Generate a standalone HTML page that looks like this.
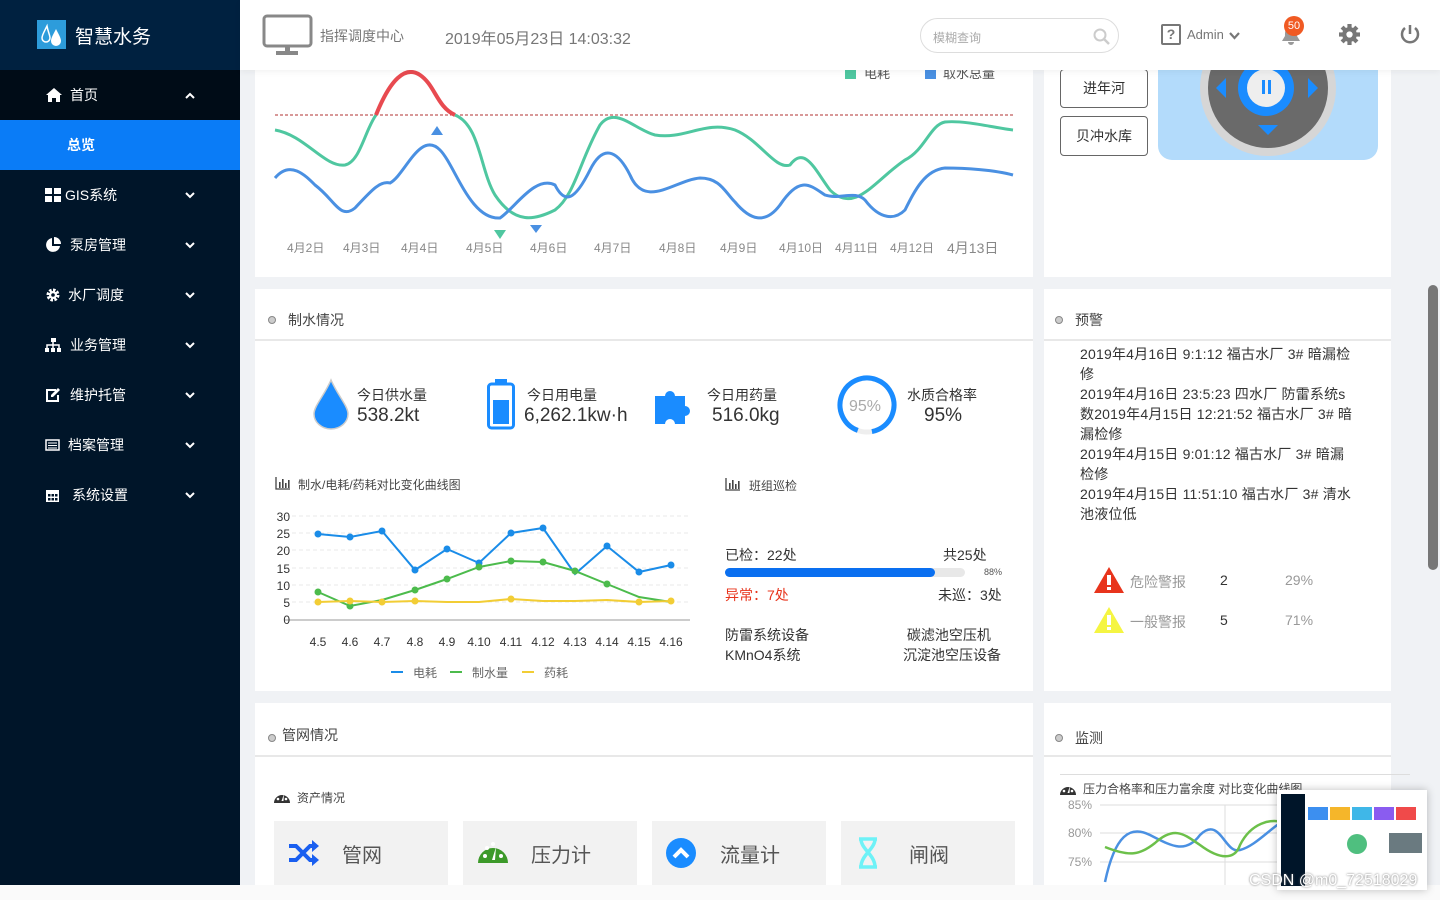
<!DOCTYPE html>
<html><head><meta charset="utf-8"><style>
*{margin:0;padding:0;box-sizing:border-box}
body{width:1440px;height:900px;overflow:hidden;background:#f0f2f5;font-family:"Liberation Sans","Noto Sans CJK SC",sans-serif;position:relative;color:#333}
.a{position:absolute}
.sb{left:0;top:0;width:240px;height:885px;background:#001529}
.logo{left:0;top:0;width:240px;height:70px;background:#002140}
.mi{position:absolute;left:0;width:240px;height:50px;color:#fff;font-size:14px;line-height:50px}
.mi svg.ic{position:absolute;left:45px;top:17px}
.mi .t{position:absolute;left:70px}
.mi svg.ar{position:absolute;left:185px;top:22px}
.card{background:#fff;position:absolute}
.ttl{position:absolute;font-size:14px;color:#444}
.dot{display:inline-block;width:8px;height:8px;border-radius:50%;border:1px solid #888;background:#ccc;margin-right:12px;vertical-align:1px}
.hr{position:absolute;height:2px;background:#e8e8e8}
.tile{position:absolute;top:821px;width:174px;height:64px;background:#f2f2f2;font-size:20px;color:#555}
.tile span{position:absolute;left:68px;top:18px}
</style></head><body>
<div class="a sb"></div>
<div class="a logo">
 <div class="a" style="left:37px;top:20px;width:29px;height:29px;background:#2d9cdb"></div>
 <svg class="a" style="left:37px;top:20px" width="29" height="29"><path d="M10 6 C7 12 5 15 5 18 a4 4 0 0 0 8 0 C13 15 11 12 10 6Z" fill="none" stroke="#fff" stroke-width="1.5"/><path d="M19 9 C16 15 14 18 14 21 a5 5 0 0 0 10 0 C24 18 22 15 19 9Z" fill="#fff"/></svg>
 <div class="a" style="left:75px;top:22px;color:#fff;font-size:19px">智慧水务</div>
</div>
<div class="mi" style="top:70px;background:#000c17"><svg class="ic" width="18" height="16"><path d="M9 1 L1 8 h2 v7 h4 v-4 h4 v4 h4 v-7 h2z" fill="#fff"/></svg><span class="t">首页</span><svg class="ar" width="10" height="7"><path d="M1 6 L5 2 L9 6" fill="none" stroke="#fff" stroke-width="2"/></svg></div>
<div class="mi" style="top:120px;background:#0a7cf7;font-weight:bold"><span class="t" style="left:67px">总览</span></div>
<div class="mi" style="top:170px"><svg class="ic" width="16" height="16"><rect x="0" y="1" width="7" height="6" fill="#fff"/><rect x="9" y="1" width="7" height="6" fill="#fff"/><rect x="0" y="9" width="7" height="6" fill="#fff"/><rect x="9" y="9" width="7" height="6" fill="#fff"/></svg><span class="t" style="left:65px">GIS系统</span><svg class="ar" width="10" height="7"><path d="M1 1 L5 5 L9 1" fill="none" stroke="#fff" stroke-width="2"/></svg></div>
<div class="mi" style="top:220px"><svg class="ic" width="16" height="16"><path d="M7 1 A7 7 0 1 0 15 9 H7Z" fill="#fff"/><path d="M9 0 V7 H16 A7 7 0 0 0 9 0Z" fill="#fff"/></svg><span class="t">泵房管理</span><svg class="ar" width="10" height="7"><path d="M1 1 L5 5 L9 1" fill="none" stroke="#fff" stroke-width="2"/></svg></div>
<div class="mi" style="top:270px"><svg class="ic" width="16" height="16"><circle cx="8" cy="8" r="5" fill="none" stroke="#fff" stroke-width="3" stroke-dasharray="2.5 1.4"/><circle cx="8" cy="8" r="4" fill="#fff"/><circle cx="8" cy="8" r="1.8" fill="#001529"/></svg><span class="t" style="left:68px">水厂调度</span><svg class="ar" width="10" height="7"><path d="M1 1 L5 5 L9 1" fill="none" stroke="#fff" stroke-width="2"/></svg></div>
<div class="mi" style="top:320px"><svg class="ic" width="16" height="16"><rect x="6" y="1" width="5" height="4" fill="#fff"/><rect x="0" y="11" width="4" height="4" fill="#fff"/><rect x="6" y="11" width="4" height="4" fill="#fff"/><rect x="12" y="11" width="4" height="4" fill="#fff"/><path d="M2 11 V8 H14 V11 M8 5 V11" fill="none" stroke="#fff" stroke-width="1.5"/></svg><span class="t">业务管理</span><svg class="ar" width="10" height="7"><path d="M1 1 L5 5 L9 1" fill="none" stroke="#fff" stroke-width="2"/></svg></div>
<div class="mi" style="top:370px"><svg class="ic" width="16" height="16"><path d="M11 3 H2 V14 H13 V8" fill="none" stroke="#fff" stroke-width="2"/><path d="M6 10 L6 8 L13 1 L15 3 L8 10Z" fill="#fff"/></svg><span class="t">维护托管</span><svg class="ar" width="10" height="7"><path d="M1 1 L5 5 L9 1" fill="none" stroke="#fff" stroke-width="2"/></svg></div>
<div class="mi" style="top:420px"><svg class="ic" width="16" height="16"><rect x="1" y="3" width="13" height="10" fill="none" stroke="#fff" stroke-width="1.5"/><path d="M3 6 H12 M3 8.5 H12 M3 11 H12" stroke="#fff"/></svg><span class="t" style="left:68px">档案管理</span><svg class="ar" width="10" height="7"><path d="M1 1 L5 5 L9 1" fill="none" stroke="#fff" stroke-width="2"/></svg></div>
<div class="mi" style="top:470px"><svg class="ic" width="16" height="16"><rect x="1" y="3" width="13" height="12" fill="#fff"/><rect x="3" y="7" width="2.5" height="2.5" fill="#001529"/><rect x="6.5" y="7" width="2.5" height="2.5" fill="#001529"/><rect x="10" y="7" width="2.5" height="2.5" fill="#001529"/><rect x="3" y="11" width="2.5" height="2.5" fill="#001529"/><rect x="6.5" y="11" width="2.5" height="2.5" fill="#001529"/><rect x="10" y="11" width="2.5" height="2.5" fill="#001529"/></svg><span class="t" style="left:72px">系统设置</span><svg class="ar" width="10" height="7"><path d="M1 1 L5 5 L9 1" fill="none" stroke="#fff" stroke-width="2"/></svg></div>

<!-- cards -->
<div class="card" style="left:255px;top:60px;width:778px;height:217px"></div>
<div class="card" style="left:1044px;top:60px;width:347px;height:217px"></div>
<div class="card" style="left:255px;top:289px;width:778px;height:402px"></div>
<div class="card" style="left:1044px;top:289px;width:347px;height:402px"></div>
<div class="card" style="left:255px;top:703px;width:778px;height:182px"></div>
<div class="card" style="left:1044px;top:703px;width:347px;height:182px"></div>
<div class="a" style="left:1428px;top:285px;width:10px;height:285px;background:#777;border-radius:5px"></div>
<div class="a" style="left:0;top:885px;width:1440px;height:15px;background:#fafafa"></div>

<!-- top chart -->
<svg class="a" style="left:255px;top:60px" width="778" height="217">
 <rect x="590" y="9" width="11" height="10" fill="#4fc7a0"/><text x="609" y="18" font-size="13" fill="#555">电耗</text>
 <rect x="670" y="9" width="11" height="10" fill="#4a90e2"/><text x="688" y="18" font-size="13" fill="#555">取水总量</text>
 <line x1="20" y1="55" x2="758" y2="55" stroke="#b03030" stroke-dasharray="3,2" stroke-width="1"/>
 <path d="M20 70 C50 75 70 108 90 105 C105 102 110 70 121 55" fill="none" stroke="#4fc7a0" stroke-width="3"/>
 <path d="M121 55 C135 20 150 5 165 15 C180 25 182 47 200 55" fill="none" stroke="#e84a50" stroke-width="4"/>
 <path d="M200 55 C225 65 225 110 240 135 C260 165 280 160 300 150 C320 135 325 100 345 65 C360 45 380 70 400 75 C430 80 450 60 480 70 C505 80 520 110 535 105 C550 85 560 110 575 130 C600 155 620 120 650 100 C670 90 675 65 690 62 C710 60 740 68 758 70" fill="none" stroke="#4fc7a0" stroke-width="3"/>
 <path d="M20 118 C35 100 50 115 60 125 C80 140 85 160 100 148 C115 132 125 120 135 123 C150 115 165 70 185 90 C200 105 215 160 245 158 C260 148 280 115 300 125 C310 145 320 140 335 110 C350 80 365 95 375 115 C390 150 420 120 445 118 C465 118 470 132 480 142 C495 160 510 165 525 145 C545 115 555 125 570 135 C585 140 600 130 610 140 C625 160 640 160 650 150 C660 130 670 110 690 108 C710 108 740 110 758 115" fill="none" stroke="#4a90e2" stroke-width="3"/>
 <path d="M176 75 l6 -9 l6 9z" fill="#4a90e2"/>
 <path d="M239 170 l6 9 l6 -9z" fill="#4fc7a0"/>
 <path d="M275 165 l6 8 l6 -8z" fill="#4a90e2"/>
 <g font-size="12" fill="#888"><text x="32" y="192">4月2日</text><text x="88" y="192">4月3日</text><text x="146" y="192">4月4日</text><text x="211" y="192">4月5日</text><text x="275" y="192">4月6日</text><text x="339" y="192">4月7日</text><text x="404" y="192">4月8日</text><text x="465" y="192">4月9日</text><text x="524" y="192">4月10日</text><text x="580" y="192">4月11日</text><text x="635" y="192">4月12日</text><text x="692" y="193" font-size="14">4月13日</text></g>
</svg>
<div class="a" style="left:1060px;top:69px;width:88px;height:39px;border:1px solid #666;border-radius:4px;font-size:14px;text-align:center;line-height:37px;background:#fff">进年河</div>
<div class="a" style="left:1060px;top:116px;width:88px;height:40px;border:1px solid #666;border-radius:4px;font-size:14px;text-align:center;line-height:38px;background:#fff">贝冲水库</div>
<div class="a" style="left:1158px;top:70px;width:220px;height:90px;background:#b3dbfb;border-radius:0 0 14px 14px;overflow:hidden">
 <svg width="220" height="90"><circle cx="110" cy="18" r="68" fill="#d6d6d6"/><circle cx="110" cy="18" r="60" fill="#6a6a6a"/><circle cx="108" cy="18" r="28" fill="#1a8cff"/><circle cx="108" cy="18" r="19" fill="#eee"/><rect x="104" y="10" width="3" height="14" fill="#1a8cff"/><rect x="110" y="10" width="3" height="14" fill="#1a8cff"/><path d="M100 55 h20 l-10 10z" fill="#1a8cff"/><path d="M150 8 l10 10 l-10 10z" fill="#1a8cff"/><path d="M68 8 l-10 10 l10 10z" fill="#1a8cff"/></svg>
</div>

<!-- header -->
<div class="a" style="left:240px;top:0;width:1200px;height:70px;background:#fff;box-shadow:0 2px 6px rgba(0,0,0,.05)"></div>
<svg class="a" style="left:262px;top:14px" width="52" height="42"><rect x="2" y="2" width="47" height="30" rx="3" fill="none" stroke="#888" stroke-width="3"/><rect x="23" y="32" width="5" height="6" fill="#888"/><rect x="14" y="37" width="22" height="4" fill="#888"/></svg>
<div class="a" style="left:320px;top:26px;font-size:14px;color:#777">指挥调度中心</div>
<div class="a" style="left:445px;top:25px;font-size:16px;color:#777">2019年05月23日 14:03:32</div>
<div class="a" style="left:920px;top:18px;width:199px;height:35px;border:1px solid #ddd;border-radius:18px"><span class="a" style="left:12px;top:10px;font-size:12px;color:#aaa">模糊查询</span>
<svg class="a" style="left:172px;top:9px" width="18" height="18"><circle cx="7" cy="7" r="5.5" fill="none" stroke="#ccc" stroke-width="2"/><line x1="11" y1="11" x2="16" y2="16" stroke="#ccc" stroke-width="2.5"/></svg></div>
<div class="a" style="left:1161px;top:24px;width:20px;height:21px;border:2px solid #777;border-radius:2px;font-size:14px;color:#777;text-align:center;line-height:17px;font-weight:bold">?</div>
<div class="a" style="left:1187px;top:27px;font-size:13px;color:#777">Admin</div>
<svg class="a" style="left:1229px;top:32px" width="11" height="8"><path d="M1 1 L5.5 6 L10 1" fill="none" stroke="#777" stroke-width="2.2"/></svg>
<svg class="a" style="left:1280px;top:24px" width="22" height="22"><path d="M11 2 C5 2 5 8 5 12 L2 17 H20 L17 12 C17 8 17 2 11 2Z M8 18 a3 3 0 0 0 6 0z" fill="#999"/></svg>
<div class="a" style="left:1284px;top:16px;width:20px;height:20px;border-radius:50%;background:#f05a23;color:#fff;font-size:11px;text-align:center;line-height:20px">50</div>
<svg class="a" style="left:1339px;top:24px" width="21" height="21" viewBox="0 0 20 20"><g fill="#777"><circle cx="10" cy="10" r="7"/><rect x="8" y="0" width="4" height="20"/><rect x="0" y="8" width="20" height="4"/><rect x="8" y="0" width="4" height="20" transform="rotate(45 10 10)"/><rect x="8" y="0" width="4" height="20" transform="rotate(-45 10 10)"/></g><circle cx="10" cy="10" r="3" fill="#fff"/></svg>
<svg class="a" style="left:1399px;top:23px" width="22" height="22"><path d="M6 5 A8 8 0 1 0 16 5" fill="none" stroke="#777" stroke-width="2.5"/><line x1="11" y1="2" x2="11" y2="11" stroke="#777" stroke-width="2.5"/></svg>

<!-- 制水情况 -->
<div class="ttl" style="left:268px;top:310px"><span class="dot"></span>制水情况</div>
<div class="hr" style="left:255px;top:339px;width:778px"></div>
<svg class="a" style="left:310px;top:378px" width="42" height="52"><path d="M21 2 C14 18 4 28 4 36 a17 15 0 0 0 34 0 C38 28 28 18 21 2Z" fill="#1a8cff" stroke="#ccc" stroke-width="1.5"/></svg>
<div class="a" style="left:357px;top:385px;font-size:14px">今日供水量</div><div class="a" style="left:357px;top:405px;font-size:19px">538.2kt</div>
<svg class="a" style="left:486px;top:378px" width="32" height="52"><rect x="2.5" y="6" width="25" height="44" rx="3" fill="none" stroke="#1a8cff" stroke-width="3"/><rect x="9" y="1" width="12" height="6" fill="#1a8cff"/><rect x="7" y="22" width="16" height="24" fill="#1a8cff"/></svg>
<div class="a" style="left:527px;top:385px;font-size:14px">今日用电量</div><div class="a" style="left:524px;top:405px;font-size:19px">6,262.1kw·h</div>
<svg class="a" style="left:653px;top:382px" width="46" height="44"><path d="M2 14 h10 a5 5 0 1 1 10 0 h10 v10 a5 5 0 1 1 0 10 v8 h-10 a5 5 0 0 0 -10 0 h-10z" fill="#1a8cff"/></svg>
<div class="a" style="left:707px;top:385px;font-size:14px">今日用药量</div><div class="a" style="left:712px;top:405px;font-size:19px">516.0kg</div>
<svg class="a" style="left:836px;top:374px" width="62" height="62"><circle cx="31" cy="31" r="27" fill="none" stroke="#eee" stroke-width="5"/><circle cx="31" cy="31" r="27" fill="none" stroke="#1a8cff" stroke-width="5" stroke-dasharray="155 170" transform="rotate(110 31 31)"/><text x="13" y="37" font-size="16" fill="#aaa">95%</text></svg>
<div class="a" style="left:907px;top:385px;font-size:14px">水质合格率</div><div class="a" style="left:924px;top:405px;font-size:19px">95%</div>

<svg class="a" style="left:275px;top:477px" width="16" height="13"><path d="M1 0 V12 H15" fill="none" stroke="#444" stroke-width="1.3"/><rect x="4" y="5" width="1.6" height="6" fill="#444"/><rect x="7" y="2" width="1.6" height="9" fill="#444"/><rect x="10" y="6" width="1.6" height="5" fill="#444"/><rect x="13" y="3" width="1.6" height="8" fill="#444"/></svg>
<div class="a" style="left:298px;top:476px;font-size:12px;color:#444">制水/电耗/药耗对比变化曲线图</div>
<svg class="a" style="left:725px;top:478px" width="16" height="13"><path d="M1 0 V12 H15" fill="none" stroke="#444" stroke-width="1.3"/><rect x="4" y="5" width="1.6" height="6" fill="#444"/><rect x="7" y="2" width="1.6" height="9" fill="#444"/><rect x="10" y="6" width="1.6" height="5" fill="#444"/><rect x="13" y="3" width="1.6" height="8" fill="#444"/></svg>
<div class="a" style="left:749px;top:477px;font-size:12px;color:#444">班组巡检</div>
<svg class="a" style="left:255px;top:500px" width="450" height="190">
 <g stroke="#e8e8e8" stroke-dasharray="4,3"><line x1="30" y1="16" x2="435" y2="16"/><line x1="30" y1="33" x2="435" y2="33"/><line x1="30" y1="50" x2="435" y2="50"/><line x1="30" y1="68" x2="435" y2="68"/><line x1="30" y1="85" x2="435" y2="85"/><line x1="30" y1="102" x2="435" y2="102"/></g>
 <line x1="30" y1="120" x2="435" y2="120" stroke="#ccc" stroke-width="2"/>
 <g font-size="12" fill="#333" text-anchor="end"><text x="35" y="21">30</text><text x="35" y="38">25</text><text x="35" y="55">20</text><text x="35" y="73">15</text><text x="35" y="90">10</text><text x="35" y="107">5</text><text x="35" y="124">0</text></g>
 <g font-size="12" fill="#333" text-anchor="middle"><text x="63" y="146">4.5</text><text x="95" y="146">4.6</text><text x="127" y="146">4.7</text><text x="160" y="146">4.8</text><text x="192" y="146">4.9</text><text x="224" y="146">4.10</text><text x="256" y="146">4.11</text><text x="288" y="146">4.12</text><text x="320" y="146">4.13</text><text x="352" y="146">4.14</text><text x="384" y="146">4.15</text><text x="416" y="146">4.16</text></g>
 <g fill="none" stroke-width="2">
 <polyline stroke="#1a8ce8" points="63,34 95,37 127,31 160,70 192,49 224,63 256,33 288,28 320,74 352,46 384,72 416,65"/>
 <polyline stroke="#4cbb4c" points="63,92 95,106 127,100 160,90 192,79 224,67 256,61 288,62 320,71 352,84 384,97 416,102"/>
 <polyline stroke="#f2cd35" points="63,102 95,101 127,102 160,101 192,102 224,102 256,99 288,101 320,101 352,100 384,102 416,101"/></g>
 <g fill="#1a8ce8"><circle cx="63" cy="34" r="3.5"/><circle cx="95" cy="37" r="3.5"/><circle cx="127" cy="31" r="3.5"/><circle cx="160" cy="70" r="3.5"/><circle cx="192" cy="49" r="3.5"/><circle cx="224" cy="63" r="3.5"/><circle cx="256" cy="33" r="3.5"/><circle cx="288" cy="28" r="3.5"/><circle cx="352" cy="46" r="3.5"/><circle cx="384" cy="72" r="3.5"/><circle cx="416" cy="65" r="3.5"/></g>
 <g fill="#4cbb4c"><circle cx="63" cy="92" r="3.5"/><circle cx="95" cy="106" r="3.5"/><circle cx="160" cy="90" r="3.5"/><circle cx="192" cy="79" r="3.5"/><circle cx="224" cy="67" r="3.5"/><circle cx="256" cy="61" r="3.5"/><circle cx="288" cy="62" r="3.5"/><circle cx="320" cy="71" r="3.5"/><circle cx="352" cy="84" r="3.5"/></g>
 <g fill="#f2cd35"><circle cx="63" cy="102" r="3.5"/><circle cx="95" cy="101" r="3.5"/><circle cx="127" cy="102" r="3.5"/><circle cx="160" cy="101" r="3.5"/><circle cx="256" cy="99" r="3.5"/><circle cx="384" cy="102" r="3.5"/><circle cx="416" cy="101" r="3.5"/></g>
 <g font-size="12" fill="#666"><line x1="136" y1="172" x2="148" y2="172" stroke="#1a8ce8" stroke-width="2"/><text x="158" y="177">电耗</text><line x1="195" y1="172" x2="207" y2="172" stroke="#4cbb4c" stroke-width="2"/><text x="217" y="177">制水量</text><line x1="267" y1="172" x2="279" y2="172" stroke="#f2cd35" stroke-width="2"/><text x="289" y="177">药耗</text></g>
</svg>
<div class="a" style="left:725px;top:545px;font-size:14px">已检：22处</div>
<div class="a" style="left:943px;top:545px;font-size:14px">共25处</div>
<div class="a" style="left:725px;top:568px;width:240px;height:9px;background:#e8e8e8;border-radius:5px"></div>
<div class="a" style="left:725px;top:568px;width:210px;height:9px;background:#0a6ff0;border-radius:5px"></div>
<div class="a" style="left:984px;top:567px;font-size:9px;color:#555">88%</div>
<div class="a" style="left:725px;top:585px;font-size:14px;color:#e8341c">异常：7处</div>
<div class="a" style="left:938px;top:585px;font-size:14px">未巡：3处</div>
<div class="a" style="left:725px;top:625px;font-size:14px;line-height:20px">防雷系统设备<br>KMnO4系统</div>
<div class="a" style="left:903px;top:625px;font-size:14px;line-height:20px">&nbsp;碳滤池空压机<br>沉淀池空压设备</div>

<!-- 预警 -->
<div class="ttl" style="left:1055px;top:310px"><span class="dot"></span>预警</div>
<div class="hr" style="left:1044px;top:339px;width:347px"></div>
<div class="a" style="left:1080px;top:344px;width:274px;font-size:14px;line-height:20px;color:#333;letter-spacing:0.2px">2019年4月16日 9:1:12 福古水厂 3# 暗漏检修<br>2019年4月16日 23:5:23 四水厂 防雷系统s数2019年4月15日 12:21:52 福古水厂 3# 暗漏检修<br>2019年4月15日 9:01:12 福古水厂 3# 暗漏检修<br>2019年4月15日 11:51:10 福古水厂 3# 清水池液位低</div>
<svg class="a" style="left:1093px;top:565px" width="32" height="30"><path d="M16 2 L31 28 H1Z" fill="#e8341c"/><rect x="14" y="10" width="4" height="10" fill="#fff"/><rect x="14" y="22" width="4" height="3" fill="#fff"/></svg>
<svg class="a" style="left:1093px;top:605px" width="32" height="30"><path d="M16 2 L31 28 H1Z" fill="#f5f542"/><rect x="14" y="10" width="4" height="10" fill="#fff"/><rect x="14" y="22" width="4" height="3" fill="#fff"/></svg>
<div class="a" style="left:1130px;top:572px;font-size:14px;color:#999">危险警报</div><div class="a" style="left:1220px;top:572px;font-size:14px">2</div><div class="a" style="left:1285px;top:572px;font-size:14px;color:#999">29%</div>
<div class="a" style="left:1130px;top:612px;font-size:14px;color:#999">一般警报</div><div class="a" style="left:1220px;top:612px;font-size:14px">5</div><div class="a" style="left:1285px;top:612px;font-size:14px;color:#999">71%</div>

<!-- 管网情况 -->
<div class="ttl" style="left:268px;top:725px"><span class="dot" style="margin-right:6px;vertical-align:-2px"></span>管网情况</div>
<div class="hr" style="left:255px;top:755px;width:778px"></div>
<svg class="a" style="left:273px;top:789px" width="18" height="15"><path d="M1 14 A8 8 0 1 1 17 14Z" fill="#333"/><circle cx="5" cy="10" r="1.3" fill="#fff"/><circle cx="6" cy="5" r="1.3" fill="#fff"/><circle cx="10" cy="3" r="1.3" fill="#fff"/><circle cx="13" cy="10" r="1.3" fill="#fff"/><path d="M11 5 L8.5 12 h2z" fill="#fff"/></svg>
<div class="a" style="left:297px;top:789px;font-size:12px;color:#444">资产情况</div>
<div class="tile" style="left:274px"><svg class="a" style="left:14px;top:18px" width="32" height="28"><path d="M1 7 h7 l14 14 h5 M1 21 h7 l14 -14 h5" fill="none" stroke="#1a5ff0" stroke-width="4"/><path d="M24 1 l7 6 l-7 6z M24 15 l7 6 l-7 6z" fill="#1a5ff0"/></svg><span>管网</span></div>
<div class="tile" style="left:463px"><svg class="a" style="left:14px;top:17px" width="32" height="26"><path d="M1 25 A15 15 0 1 1 31 25Z" fill="#3d9a2a"/><circle cx="8" cy="18" r="2" fill="#fff"/><circle cx="10" cy="10" r="2" fill="#fff"/><circle cx="16" cy="6" r="2" fill="#fff"/><circle cx="24" cy="18" r="2" fill="#fff"/><path d="M19 9 L15 22 h3z" fill="#fff"/></svg><span>压力计</span></div>
<div class="tile" style="left:652px"><svg class="a" style="left:14px;top:17px" width="30" height="30"><circle cx="15" cy="15" r="15" fill="#1a8cff"/><path d="M8 19 L15 12 L22 19" fill="none" stroke="#fff" stroke-width="4"/></svg><span>流量计</span></div>
<div class="tile" style="left:841px"><svg class="a" style="left:16px;top:16px" width="22" height="32"><path d="M2 2 h18 M2 30 h18 M4 2 C4 12 18 18 18 30 M18 2 C18 12 4 18 4 30" fill="none" stroke="#6ef2f7" stroke-width="3.5"/></svg><span>闸阀</span></div>

<!-- 监测 -->
<div class="ttl" style="left:1055px;top:728px"><span class="dot"></span>监测</div>
<div class="hr" style="left:1044px;top:755px;width:347px"></div>
<div class="a" style="left:1060px;top:774px;width:350px;height:1px;background:#ddd"></div>
<svg class="a" style="left:1059px;top:781px" width="18" height="15"><path d="M1 14 A8 8 0 1 1 17 14Z" fill="#333"/><circle cx="5" cy="10" r="1.3" fill="#fff"/><circle cx="6" cy="5" r="1.3" fill="#fff"/><circle cx="10" cy="3" r="1.3" fill="#fff"/><circle cx="13" cy="10" r="1.3" fill="#fff"/><path d="M11 5 L8.5 12 h2z" fill="#fff"/></svg>
<div class="a" style="left:1083px;top:780px;font-size:12px;color:#444">压力合格率和压力富余度 对比变化曲线图</div>
<svg class="a" style="left:1060px;top:795px" width="330" height="90">
 <g stroke="#ddd"><line x1="40" y1="10" x2="330" y2="10"/><line x1="40" y1="38" x2="330" y2="38"/><line x1="40" y1="67" x2="330" y2="67"/><line x1="165" y1="10" x2="165" y2="90"/></g>
 <g font-size="12" fill="#999"><text x="8" y="14">85%</text><text x="8" y="42">80%</text><text x="8" y="71">75%</text></g>
 <path d="M45 87 C55 40 70 30 90 40 C110 50 125 60 140 40 C160 20 165 60 180 55 C200 50 220 20 240 20" fill="none" stroke="#4a90e2" stroke-width="2.5"/>
 <path d="M45 52 C70 62 80 60 95 48 C115 30 125 40 140 50 C160 65 175 65 180 50 C190 30 210 20 230 30" fill="none" stroke="#6cc04a" stroke-width="2.5"/>
</svg>
<div class="a" style="left:1277px;top:790px;width:150px;height:100px;background:#fff;box-shadow:0 0 8px rgba(0,0,0,.25)">
 <div class="a" style="left:4px;top:4px;width:24px;height:92px;background:#001529"></div>
 <div class="a" style="left:31px;top:17px;width:20px;height:13px;background:#3c8ff0"></div>
 <div class="a" style="left:53px;top:17px;width:20px;height:13px;background:#f5b62a"></div>
 <div class="a" style="left:75px;top:17px;width:20px;height:13px;background:#3fb7e8"></div>
 <div class="a" style="left:97px;top:17px;width:20px;height:13px;background:#8a5cf0"></div>
 <div class="a" style="left:119px;top:17px;width:20px;height:13px;background:#f04a4a"></div>
 <div class="a" style="left:112px;top:43px;width:33px;height:20px;background:#6a7a80"></div>
 <div class="a" style="left:70px;top:44px;width:20px;height:20px;border-radius:50%;background:#4fbf7f"></div>
</div>
<div class="a" style="left:1249px;top:872px;font-size:16px;color:#fff;text-shadow:0 0 2px #666">CSDN @m0_72518029</div>
</body></html>
